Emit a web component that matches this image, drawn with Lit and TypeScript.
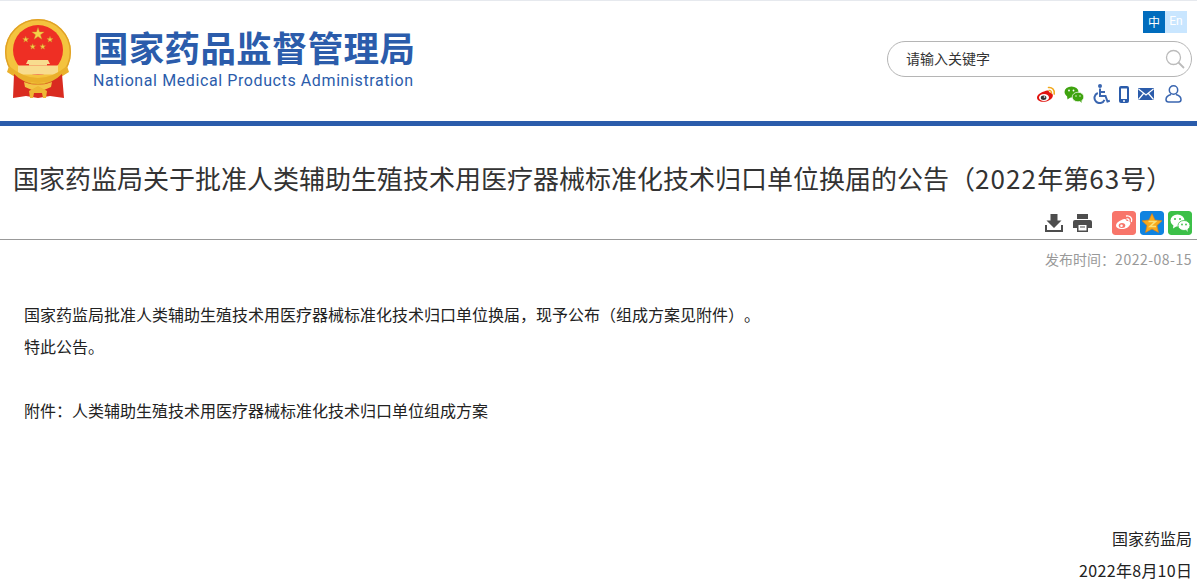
import { LitElement, html, css, svg } from "lit";
import { customElement } from "lit/decorators.js";

const star = (cx: number, cy: number, r: number) => {
  const pts: string[] = [];
  for (let i = 0; i < 10; i++) {
    const a = -Math.PI / 2 + (i * Math.PI) / 5;
    const rr = i % 2 ? r * 0.4 : r;
    pts.push(`${(cx + rr * Math.cos(a)).toFixed(2)},${(cy + rr * Math.sin(a)).toFixed(2)}`);
  }
  return svg`<polygon points=${pts.join(" ")} fill="#f6d24a" stroke="#c9962a" stroke-width=".4"/>`;
};

@customElement("app-root")
export class AppRoot extends LitElement {
  static styles = css`
    :host {
      display: block;
      width: 1197px;
      height: 587px;
      overflow: hidden;
      background: #fff;
      font-family: "Noto Sans CJK SC", "Liberation Sans", sans-serif;
      color: #222;
      text-spacing-trim: space-all;
    }
    .top {
      height: 120px;
      border-top: 1px solid #e6e9ee;
      display: flex;
      justify-content: space-between;
    }
    .brand {
      display: flex;
      padding: 9px 0 0 0;
      gap: 13px;
    }
    .emblem { display: block; width: 80px; height: 90px; }
    .names { display: flex; flex-direction: column; padding-top: 14px; }
    .cn {
      font-size: 35.5px;
      line-height: 46px;
      font-weight: 700;
      letter-spacing: 0.3px;
      color: #2b5cab;
      white-space: nowrap;
    }
    .en {
      font-family: Roboto, sans-serif;
      font-size: 16px;
      line-height: 20px;
      letter-spacing: 0.6px;
      margin-top: 1px;
      color: #2b5cab;
      white-space: nowrap;
    }
    .tools {
      width: 310px;
      padding: 10px 5px 0 0;
      display: flex;
      flex-direction: column;
      align-items: flex-end;
    }
    .lang { display: flex; height: 22px; margin-right: 5px; }
    .lang span {
      width: 22px;
      font-size: 12px;
      line-height: 21px;
      text-align: center;
    }
    .lang .on { background: #006cbd; color: #fff; }
    .lang .off { background: #c9e6ff; color: #fff; font-family: Roboto, sans-serif; }
    .search {
      margin-top: 8px;
      height: 34px;
      width: 279px;
      border: 1px solid #b5b5b5;
      border-radius: 18px;
      display: flex;
      align-items: center;
      justify-content: space-between;
      padding: 0 6px 0 18px;
      font-size: 14px;
      color: #333;
    }
    .search span { padding-bottom: 2px; }
    .icons { display: flex; align-items: center; margin-top: 6px; padding-right: 10px; height: 22px; }
    .bar { height: 5px; background: #2b5cab; }
    h1 {
      margin: 0;
      padding: 33px 0 0 13px;
      height: 50px;
      font-size: 26px;
      line-height: 38px;
      font-weight: 400;
      color: #333;
      white-space: nowrap;
    }
    h1 .num { letter-spacing: 1.1px; }
    .actions {
      height: 28px;
      padding: 0 5px 2px 0;
      display: flex;
      justify-content: flex-end;
      align-items: center;
    }
    .actions svg { display: block; }
    .print { margin-left: 10px; margin-right: 20px; }
    .share { margin-left: 4px; border-radius: 3px; }
    .print + .share { margin-left: 0; }
    .rule { height: 1px; background: #999; }
    .date {
      text-align: right;
      padding-right: 5px;
      font-size: 14px;
      line-height: 20px;
      margin-top: 9px;
      color: #999;
    }
    .date .num { letter-spacing: 0.5px; }
    .body { padding: 29px 0 0 24px; font-size: 16px; line-height: 32px; color: #222; }
    .body p { margin: 0; white-space: nowrap; }
    .gap { height: 32px; }
    .sign { margin-top: 96px; padding-right: 5px; text-align: right; font-size: 16px; line-height: 32px; color: #222; }
    .sign p { margin: 0; }
    .sign .num { letter-spacing: 0.4px; }
  `;

  emblem() {
    return html`<svg class="emblem" viewBox="0 0 80 90">
      <circle cx="38" cy="42" r="33" fill="#f4c33e"/>
      <circle cx="38" cy="42" r="32.300" fill="none" stroke="#e0a126" stroke-width="1.400"/>
      <circle cx="38" cy="40" r="25" fill="#ee2f24"/>
      ${star(38, 24, 6.500)}${star(25.700, 29.500, 3.200)}${star(50, 29.500, 3.200)}${star(32.700, 36.700, 3)}${star(42.700, 36.700, 3)}
      <path d="M28 50 L48 50 L50 54 L47 54 V55.500 H29 V54 H26 Z" fill="#f8dc8e"/>
      <rect x="18" y="55.500" width="40" height="9" fill="#f8dc8e"/>
      <path d="M9 56 Q38 80 67 56 L69 62 Q38 84 7 62 Z" fill="#eab02c"/>
      <path d="M14 64 Q24 74 38 75 Q52 74 62 64 L64 88 L50 86 L38 88 L26 86 L13 88 Z" fill="#d92b20"/>
      <path d="M24 72 Q38 78 52 72 L51 77 L44 80 L38 77 L32 80 L25 77 Z" fill="#f3c546"/>
      <path d="M29 81 L38 76 L47 81 L46 88 H43 L42 83 H34 L33 88 H30 Z" fill="#eeb735"/>
    </svg>`;
  }

  weibo(w: number, h: number) {
    return html`<svg width=${w} height=${h} viewBox="0 0 20 17">
      <path d="M8 5.500c3.500-1.600 5-1 5.200.8 3 .3 4.200 2 3.500 4.200-1.100 3.300-5.700 5.500-9.700 5.300C3.500 15.600 1 14 1 11.500 1 9.500 3.500 6.800 8 5.500z" fill="#e1140f"/>
      <ellipse cx="8" cy="11.500" rx="5" ry="3.600" fill="#fff"/>
      <ellipse cx="7.600" cy="11.700" rx="2.800" ry="2.200" fill="#333"/>
      <circle cx="8.500" cy="11" r=".8" fill="#fff"/>
      <path d="M12.500 1.500c3.500-.5 6.500 2.500 5.700 6.500" fill="none" stroke="#f2a81d" stroke-width="1.600" stroke-linecap="round"/>
      <path d="M13 4.500c1.700-.2 2.700 1 2.500 2.500" fill="none" stroke="#f2a81d" stroke-width="1.300" stroke-linecap="round"/>
    </svg>`;
  }

  render() {
    return html`
      <div class="top">
        <div class="brand">
          ${this.emblem()}
          <div class="names">
            <div class="cn">国家药品监督管理局</div>
            <div class="en">National Medical Products Administration</div>
          </div>
        </div>
        <div class="tools">
          <div class="lang"><span class="on">中</span><span class="off">En</span></div>
          <div class="search">
            <span>请输入关键字</span>
            <svg width="20" height="20" viewBox="0 0 20 20" fill="none" stroke="#bbb">
              <circle cx="8.500" cy="8.500" r="7" stroke-width="1.300"/>
              <path d="M13.500 13.500 L19 19" stroke-width="1.800"/>
            </svg>
          </div>
          <div class="icons">
            ${this.weibo(20, 17)}
            <svg width="20" height="17" viewBox="0 0 20 17" fill="#3fa30f" style="margin-left:8px">
              <ellipse cx="7.500" cy="6" rx="7" ry="5.500"/><path d="M3 10 L3.500 13.500 L7 11z"/>
              <ellipse cx="14" cy="11" rx="5.800" ry="4.800" stroke="#fff" stroke-width=".7"/><path d="M16 15 L17.500 17 L17.500 14z"/>
              <circle cx="5" cy="4.500" r=".9" fill="#fff"/><circle cx="9.500" cy="4.500" r=".9" fill="#fff"/>
              <circle cx="12" cy="10" r=".7" fill="#fff"/><circle cx="16" cy="10" r=".7" fill="#fff"/>
            </svg>
            <svg width="17" height="20" viewBox="0 0 17 20" fill="none" stroke="#3a66b0" stroke-width="2" style="margin-left:9px">
              <circle cx="7" cy="2" r="2" fill="#3a66b0" stroke="none"/>
              <path d="M7 4.500 V12 H12.500 L14.500 17.500 L16.800 16.800"/>
              <path d="M7 8 H12"/>
              <path d="M4.800 9 A5.200 5.200 0 1 0 11.500 15.800"/>
            </svg>
            <svg width="10" height="17" viewBox="0 0 10 17" style="margin-left:9px">
              <rect x="0" y="0" width="10" height="17" rx="2" fill="#2b5cab"/>
              <rect x="2" y="2.500" width="6" height="10.500" fill="#fff"/>
              <circle cx="5" cy="15" r="1" fill="#fff"/>
            </svg>
            <svg width="16" height="12" viewBox="0 0 16 12" style="margin-left:9px">
              <rect width="16" height="12" rx="1" fill="#2b5cab"/>
              <path d="M0.500 1 L8 7 L15.500 1 M0.500 11.500 L5.500 5.500 M15.500 11.500 L10.500 5.500" stroke="#fff" stroke-width="1.200" fill="none"/>
            </svg>
            <svg width="17" height="18" viewBox="0 0 17 18" fill="none" stroke="#3a66b0" stroke-width="1.500" style="margin-left:11px">
              <circle cx="8.500" cy="5" r="4.200"/>
              <path d="M6 9.500 C2.500 10.500 1 12.500 1 14.500 C1 16 2 17 3.500 17 H13.500 C15 17 16 16 16 14.500 C16 12.500 14.500 10.500 11 9.500"/>
            </svg>
          </div>
        </div>
      </div>
      <div class="bar"></div>
      <h1>国家药监局关于批准人类辅助生殖技术用医疗器械标准化技术归口单位换届的公告（<span class="num">2022</span>年第<span class="num">63</span>号）</h1>
      <div class="actions">
        <svg width="18" height="18" viewBox="0 0 18 18" fill="#4d4d4d">
          <path d="M5.500 0 H12.500 V6.500 H16.500 L9 14 L1.500 6.500 H5.500 Z"/>
          <path d="M1 11 V17 H17 V11" fill="none" stroke="#4d4d4d" stroke-width="2"/>
        </svg>
        <svg class="print" width="19" height="18" viewBox="0 0 19 18" fill="#4d4d4d">
          <path d="M4 0 H15 V5 H4 Z"/>
          <path fill-rule="evenodd" d="M2 6 H17 Q19 6 19 8 V14 H15 V18 H4 V14 H0 V8 Q0 6 2 6 Z M5.500 11 V16.500 H13.500 V11 Z"/>
          <rect x="7" y="12.500" width="5" height="1" />
        </svg>
        <svg class="share" width="24" height="24" viewBox="0 0 24 24">
          <rect width="24" height="24" rx="3" fill="#f8756a"/>
          <path d="M9.500 9c3.500-2 5-1 5 1 3-.5 4.500 1 3.800 3-1 3-4.500 5-8.300 5C6.500 18 4 16.500 4 14.500 4 12.500 6 10.500 9.500 9z" fill="#fff"/>
          <ellipse cx="10" cy="14.500" rx="3.300" ry="2.500" fill="#f8756a"/>
          <circle cx="9.500" cy="14.700" r="1.300" fill="#fff"/>
          <path d="M14.500 5c3.500-.5 6 2 5 5.500 M15 8c1.500-.2 2.200.8 2 2" fill="none" stroke="#fff" stroke-width="1.300" stroke-linecap="round"/>
        </svg>
        <svg class="share" width="24" height="24" viewBox="0 0 24 24">
          <rect width="24" height="24" rx="3" fill="#0f83e0"/>
          <path d="M12 2.500 L15 9 L22 9.800 L17 14.500 L18.500 21.500 L12 18 L5.500 21.500 L7 14.500 L2 9.800 L9 9 Z" fill="#f9a91b" stroke="#e37f0f" stroke-width=".6"/>
          <path d="M8.500 10.500 H15.500 L10 15.500 H16" fill="none" stroke="#f8e17a" stroke-width="1.600"/>
        </svg>
        <svg class="share" width="24" height="24" viewBox="0 0 24 24">
          <rect width="24" height="24" rx="3" fill="#3cc048"/>
          <ellipse cx="9.500" cy="9.500" rx="7" ry="6" fill="#fff"/>
          <path d="M5.500 13.500 L5 17.500 L9 15z" fill="#fff"/>
          <ellipse cx="16" cy="14.500" rx="6" ry="5" fill="#fff" stroke="#3cc048" stroke-width=".8"/>
          <path d="M18 18.500 L19.500 21 L19.500 17.500z" fill="#fff"/>
          <circle cx="7" cy="8" r="1" fill="#3cc048"/><circle cx="12" cy="8" r="1" fill="#3cc048"/>
          <circle cx="14" cy="13.500" r=".9" fill="#3cc048"/><circle cx="18" cy="13.500" r=".9" fill="#3cc048"/>
        </svg>
      </div>
      <div class="rule"></div>
      <div class="date">发布时间：<span class="num">2022-08-15</span></div>
      <div class="body">
        <p>国家药监局批准人类辅助生殖技术用医疗器械标准化技术归口单位换届，现予公布（组成方案见附件）。</p>
        <p>特此公告。</p>
        <div class="gap"></div>
        <p>附件：人类辅助生殖技术用医疗器械标准化技术归口单位组成方案</p>
      </div>
      <div class="sign">
        <p>国家药监局</p>
        <p><span class="num">2022</span>年<span class="num">8</span>月<span class="num">10</span>日</p>
      </div>
    `;
  }
}
